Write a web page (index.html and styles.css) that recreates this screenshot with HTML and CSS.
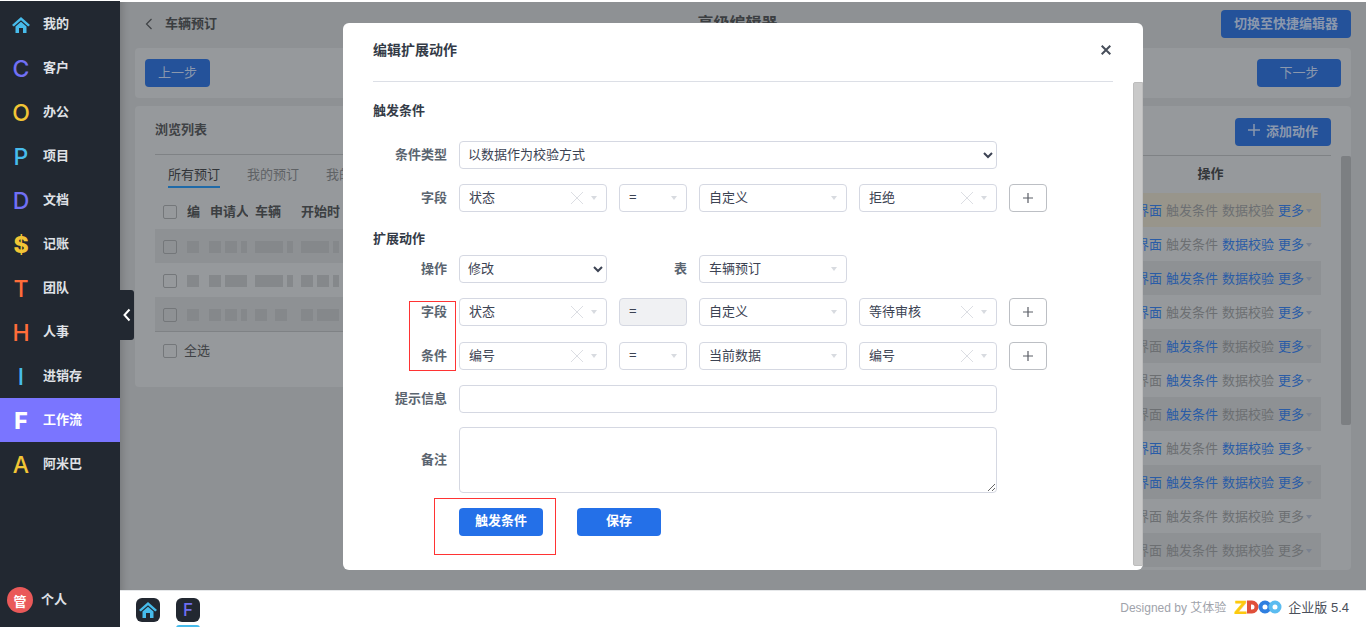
FILE: index.html
```html
<!DOCTYPE html>
<html lang="zh-CN">
<head>
<meta charset="utf-8">
<title>编辑扩展动作</title>
<link rel="stylesheet" href="styles.css">
</head>
<body>
<div class="app">

  <div class="sidebar">
    <div class="nav-item">
      <span class="nav-icon">
        <svg width="18" height="16" viewBox="0 0 18 16"><path fill="#47bcec" d="M0 8 9 0l9 8-1.8 1.6L9 3.2 1.8 9.6z"/><path fill="#47bcec" d="M3.5 9.6 9 4.8l5.500 4.800V16H11v-5H7v5H3.500z"/></svg>
      </span>我的
    </div>
    <div class="nav-item"><span class="nav-icon c-purple">C</span>客户</div>
    <div class="nav-item"><span class="nav-icon c-yellow">O</span>办公</div>
    <div class="nav-item"><span class="nav-icon c-blue">P</span>项目</div>
    <div class="nav-item"><span class="nav-icon c-purple">D</span>文档</div>
    <div class="nav-item"><span class="nav-icon c-yellow heavy">$</span>记账</div>
    <div class="nav-item"><span class="nav-icon c-orange">T</span>团队</div>
    <div class="nav-item"><span class="nav-icon c-orange">H</span>人事</div>
    <div class="nav-item"><span class="nav-icon c-blue">I</span>进销存</div>
    <div class="nav-item active"><span class="nav-icon heavy">F</span>工作流</div>
    <div class="nav-item"><span class="nav-icon c-yellow">A</span>阿米巴</div>
    <div class="user"><span class="avatar">管</span><span class="user-name">个人</span></div>
  </div>

  <div class="collapse-tab">
    <svg width="8" height="14" viewBox="0 0 8 14"><path d="M6.500 1.500 1.500 7l5 5.500" fill="none" stroke="#fff" stroke-width="2"/></svg>
  </div>

  <div class="content">
    <div class="main">
      <div class="topbar">
        <div class="topbar-left">
          <svg width="8" height="12" viewBox="0 0 8 12"><path d="M6.500 1 1.500 6l5 5" fill="none" stroke="#3f4245" stroke-width="1.200"/></svg>
          <span class="page-name">车辆预订</span>
        </div>
        <div class="page-title">高级编辑器</div>
        <div class="topbar-right"><button class="dim-btn switch-btn">切换至快捷编辑器</button></div>
      </div>

      <div class="steps">
        <button class="dim-btn prev-btn">上一步</button>
        <button class="dim-btn next-btn">下一步</button>
      </div>

      <div class="panels">
        <div class="panel-left">
          <div class="panel-title">浏览列表</div>
          <div class="tabs">
            <span class="tab current">所有预订</span>
            <span class="tab">我的预订</span>
            <span class="tab">我的审批</span>
          </div>
          <div class="list-head">
            <span class="box"></span>
            <span class="col col-no">编</span>
            <span class="col col-man">申请人</span>
            <span class="col col-car">车辆</span>
            <span class="col col-start">开始时间</span>
          </div>
          <div class="list-row even">
            <span class="box"></span>
            <span class="col col-no"><i class="m12"></i></span>
            <span class="col col-man"><i class="m12"></i><i class="m12"></i><i class="m6"></i></span>
            <span class="col col-car"><i class="m28"></i><i class="m6"></i></span>
            <span class="col col-start"><i class="m28"></i><i class="m6"></i></span>
          </div>
          <div class="list-row">
            <span class="box"></span>
            <span class="col col-no"><i class="m12"></i></span>
            <span class="col col-man"><i class="m12"></i><i class="m22"></i></span>
            <span class="col col-car"><i class="m28"></i><i class="m6"></i></span>
            <span class="col col-start"><i class="m12"></i><i class="m12"></i><i class="m6"></i></span>
          </div>
          <div class="list-row even last">
            <span class="box"></span>
            <span class="col col-no"><i class="m12"></i></span>
            <span class="col col-man"><i class="m12"></i><i class="m12"></i><i class="m6"></i></span>
            <span class="col col-car"><i class="m12"></i><i class="m12 wide-gap"></i></span>
            <span class="col col-start"><i class="m12"></i><i class="m22"></i></span>
          </div>
          <div class="select-all"><span class="box"></span>全选</div>
        </div>

        <div class="panel-right">
          <div class="panel-head">
            <button class="dim-btn add-btn"><svg width="12" height="12" viewBox="0 0 12 12"><path d="M6 0v12M0 6h12" stroke="#8b98ad" stroke-width="1.500"/></svg>添加动作</button>
          </div>
          <div class="op-wrap">
            <div class="op-table">
              <div class="op-head">操作</div>
              <div class="op-row tan"><span class="on">界面</span><span>触发条件</span><span>数据校验</span><span class="on">更多</span><i class="more"></i></div>
              <div class="op-row"><span class="on">界面</span><span>触发条件</span><span class="on">数据校验</span><span class="on">更多</span><i class="more"></i></div>
              <div class="op-row even"><span class="on">界面</span><span class="on">触发条件</span><span class="on">数据校验</span><span class="on">更多</span><i class="more"></i></div>
              <div class="op-row"><span class="on">界面</span><span>触发条件</span><span>数据校验</span><span class="on">更多</span><i class="more"></i></div>
              <div class="op-row even"><span>界面</span><span class="on">触发条件</span><span>数据校验</span><span class="on">更多</span><i class="more"></i></div>
              <div class="op-row"><span>界面</span><span class="on">触发条件</span><span>数据校验</span><span class="on">更多</span><i class="more"></i></div>
              <div class="op-row even"><span>界面</span><span class="on">触发条件</span><span>数据校验</span><span class="on">更多</span><i class="more"></i></div>
              <div class="op-row"><span class="on">界面</span><span>触发条件</span><span class="on">数据校验</span><span class="on">更多</span><i class="more"></i></div>
              <div class="op-row even"><span class="on">界面</span><span class="on">触发条件</span><span class="on">数据校验</span><span class="on">更多</span><i class="more"></i></div>
              <div class="op-row"><span>界面</span><span>触发条件</span><span>数据校验</span><span>更多</span><i class="more"></i></div>
              <div class="op-row even"><span>界面</span><span>触发条件</span><span>数据校验</span><span>更多</span><i class="more"></i></div>
            </div>
            <div class="page-scroll"></div>
          </div>
        </div>
      </div>

      <div class="overlay">
        <div class="modal">
          <div class="modal-head">
            <span class="modal-title">编辑扩展动作</span>
            <svg class="modal-close" width="10" height="10" viewBox="0 0 10 10"><path d="M.7.7l8.600 8.600M9.300.7.7 9.300" stroke="#474e5a" stroke-width="2"/></svg>
          </div>
          <div class="modal-body">
            <div class="form">
              <div class="form-heading first">触发条件</div>
              <div class="form-row gap-21">
                <label class="lbl">条件类型</label>
                <select class="native w-full"><option>以数据作为校验方式</option></select>
              </div>
              <div class="form-row">
                <label class="lbl">字段</label>
                <div class="chosen w148"><span class="val">状态</span><i class="clear"></i><i class="arrow"></i></div>
                <div class="chosen w68"><span class="val">=</span><i class="arrow"></i></div>
                <div class="chosen w148"><span class="val">自定义</span><i class="arrow"></i></div>
                <div class="chosen w138"><span class="val">拒绝</span><i class="clear"></i><i class="arrow"></i></div>
                <button class="plus"><svg width="10" height="10" viewBox="0 0 10 10"><path d="M5 0v10M0 5h10" stroke="#5a5e66" stroke-width="1.200"/></svg></button>
              </div>
              <div class="form-heading">扩展动作</div>
              <div class="form-row gap-7">
                <label class="lbl">操作</label>
                <select class="native w148"><option>修改</option></select>
                <label class="lbl w68">表</label>
                <div class="chosen w148"><span class="val">车辆预订</span><i class="arrow"></i></div>
              </div>
              <div class="form-row">
                <label class="lbl">字段</label>
                <div class="chosen w148"><span class="val">状态</span><i class="clear"></i><i class="arrow"></i></div>
                <div class="chosen w68 disabled"><span class="val">=</span></div>
                <div class="chosen w148"><span class="val">自定义</span><i class="arrow"></i></div>
                <div class="chosen w138"><span class="val">等待审核</span><i class="clear"></i><i class="arrow"></i></div>
                <button class="plus"><svg width="10" height="10" viewBox="0 0 10 10"><path d="M5 0v10M0 5h10" stroke="#5a5e66" stroke-width="1.200"/></svg></button>
              </div>
              <div class="form-row gap-16">
                <label class="lbl">条件</label>
                <div class="chosen w148"><span class="val">编号</span><i class="clear"></i><i class="arrow"></i></div>
                <div class="chosen w68"><span class="val">=</span><i class="arrow"></i></div>
                <div class="chosen w148"><span class="val">当前数据</span><i class="arrow"></i></div>
                <div class="chosen w138"><span class="val">编号</span><i class="clear"></i><i class="arrow"></i></div>
                <button class="plus"><svg width="10" height="10" viewBox="0 0 10 10"><path d="M5 0v10M0 5h10" stroke="#5a5e66" stroke-width="1.200"/></svg></button>
              </div>
              <div class="form-row">
                <label class="lbl">提示信息</label>
                <input class="text-input w-full" type="text">
              </div>
              <div class="form-row gap-14 tall">
                <label class="lbl">备注</label>
                <textarea class="text-area w-full"></textarea>
              </div>
              <div class="form-actions">
                <button class="primary">触发条件</button>
                <button class="primary">保存</button>
              </div>
            </div>
            <div class="modal-scroll"></div>
          </div>
          <div class="mark mark-fields"></div>
          <div class="mark mark-button"></div>
        </div>
      </div>
    </div>

    <div class="footer">
      <div class="app-tab">
        <span class="app-icon">
          <svg width="18" height="16" viewBox="0 0 18 16"><path fill="#47bcec" d="M0 8 9 0l9 8-1.800 1.600L9 3.200 1.800 9.600z"/><path fill="#47bcec" d="M3.500 9.600 9 4.800l5.500 4.800V16H11v-5H7v5H3.500z"/></svg>
        </span>
      </div>
      <div class="app-tab open">
        <span class="app-icon letter">F</span>
        <span class="open-bar"></span>
      </div>
      <div class="footer-right">
        <span class="designed">Designed by 艾体验</span>
        <svg class="logo" width="48" height="14" viewBox="0 0 48 14">
          <text x="0.500" y="13.500" font-family="Liberation Sans" font-weight="700" font-size="18" textLength="12.500" lengthAdjust="spacingAndGlyphs" fill="#fdc90f" stroke="#fdc90f" stroke-width=".6">Z</text>
          <path d="M15 2.500h3a4.500 4.500 0 0 1 0 9h-3z" fill="#fff" stroke="#e0503a" stroke-width="4"/>
          <circle cx="31" cy="7" r="4.500" fill="#fff" stroke="#2f7fe0" stroke-width="4"/>
          <circle cx="41" cy="7" r="4.500" fill="#fff" stroke="#5bbcf0" stroke-width="4"/>
        </svg>
        <span class="edition">企业版 5.4</span>
      </div>
    </div>
  </div>

</div>
</body>
</html>
```

FILE: styles.css
```css
* {
  box-sizing: border-box;
}

html, body {
  margin: 0;
  height: 100%;
  background: #fff;
  overflow: hidden;
}

body {
  font-family: "Liberation Sans", "Noto Sans CJK SC", sans-serif;
  font-size: 13px;
  color: #3c4353;
}

button, select, input, textarea {
  font-family: inherit;
  font-size: 13px;
}

.app {
  display: flex;
  width: 1366px;
  height: 627px;
  padding-top: 2px;
  position: relative;
}

/* sidebar */
.sidebar {
  width: 120px;
  margin-top: -1px;
  padding-top: 1px;
  flex: none;
  display: flex;
  flex-direction: column;
  background: #222831;
  color: #dfe1e6;
  font-weight: bold;
}

.nav-item {
  height: 44px;
  display: flex;
  align-items: center;
  line-height: 20px;
}

.nav-item.active {
  background: #7a75ff;
  color: #fff;
}

.nav-icon {
  width: 43px;
  flex: none;
  display: flex;
  justify-content: center;
  font-family: Inter, sans-serif;
  font-size: 23px;
  font-weight: 500;
  line-height: 24px;
  padding-right: 1px;
  padding-top: 1px;
}

.heavy { font-weight: 800; }
.c-purple { color: #7170f5; }
.c-yellow { color: #f2c535; }
.c-blue { color: #47bcec; }
.c-orange { color: #ff6d3a; }

.user {
  margin-top: auto;
  padding: 0 0 14px 7px;
  display: flex;
  align-items: center;
  gap: 8px;
}

.user-name { padding-bottom: 4px; }

.avatar {
  width: 26px;
  height: 26px;
  border-radius: 50%;
  background: #ea5959;
  color: #fff;
  display: flex;
  align-items: center;
  justify-content: center;
}

.collapse-tab {
  position: absolute;
  left: 120px;
  top: 290px;
  width: 14px;
  height: 50px;
  background: #222831;
  border-radius: 0 3px 3px 0;
  z-index: 5;
  display: flex;
  align-items: center;
  justify-content: center;
}

/* dimmed page under the dialog */
.content {
  flex: 1;
  min-width: 0;
  display: flex;
  flex-direction: column;
}

.main {
  height: 588px;
  flex: none;
  position: relative;
  background: #8e9194;
  box-shadow: inset 10px 0 8px -8px rgba(0, 0, 0, .18);
  overflow: hidden;
}

.topbar {
  display: flex;
  align-items: center;
  padding: 8px 15px 10px 25px;
}

.topbar-left, .topbar-right {
  flex: 1;
  display: flex;
  align-items: center;
}

.topbar-left { gap: 12px; }
.topbar-right { justify-content: flex-end; }

.page-name {
  font-weight: bold;
  color: #3b3e41;
  padding-bottom: 4px;
}

.page-title {
  font-size: 16px;
  font-weight: bold;
  color: #3b3e41;
  margin-right: 21px;
  padding-bottom: 4px;
}

.dim-btn {
  height: 28px;
  border: 0;
  border-radius: 4px;
  background: #24529a;
  color: #8b98ad;
  font-weight: bold;
  padding: 0 0 4px;
}

.switch-btn { width: 130px; }
.prev-btn { width: 65px; font-weight: normal; }
.next-btn { width: 84px; font-weight: normal; }

.steps {
  margin: 0 15px;
  height: 50px;
  padding: 0 10px;
  display: flex;
  align-items: center;
  justify-content: space-between;
  background: #96999c;
  border-radius: 4px;
}

.panels {
  margin: 8px 15px 0;
  display: flex;
  align-items: flex-start;
}

.panel-left {
  width: 300px;
  height: 281px;
  flex: none;
  background: #96999c;
  border-radius: 4px 0 0 4px;
  padding: 0 0 0 20px;
  overflow: hidden;
}

.panel-title {
  height: 49px;
  line-height: 48px;
  font-weight: bold;
  color: #3f4245;
  border-bottom: 1px solid #7f8285;
}

.tabs {
  height: 36px;
  padding: 11px 0 0 13px;
  display: flex;
  gap: 27px;
  white-space: nowrap;
}

.tab {
  height: 22px;
  line-height: 18px;
  color: #5f6265;
}

.tab.current {
  color: #323538;
  border-bottom: 2px solid #1f6aa8;
}

.list-head, .list-row {
  display: flex;
  align-items: center;
  padding-left: 8px;
  white-space: nowrap;
}

.list-head {
  height: 38px;
  font-weight: bold;
  color: #3c3f42;
}

.list-head .box { margin-top: 4px; }

.list-row {
  height: 34px;
  padding-top: 2px;
}

.list-row.even { background: #8e9194; }
.list-row.last { border-bottom: 1px solid #7f8285; height: 35px; }

.box {
  width: 14px;
  height: 14px;
  flex: none;
  border: 1px solid #74777a;
  border-radius: 2px;
  margin-right: 10px;
}

.col {
  display: flex;
  gap: 4px;
  flex: none;
  overflow: hidden;
}

.col-no { width: 22px; }
.col-man { width: 46px; }
.list-head .col-man { padding-left: 1px; width: 39px; margin-right: 7px; }
.col-car { width: 46px; }
.col-start { width: 39px; }

.col i {
  display: block;
  height: 12px;
  background: #85888b;
  flex: none;
}

.m6 { width: 6px; }
.m12 { width: 12px; }
.m22 { width: 22px; }
.m28 { width: 28px; }
.wide-gap { margin-left: 4px; }

.select-all {
  display: flex;
  align-items: center;
  line-height: 14px;
  padding: 12px 0 0 8px;
  color: #3f4245;
}

.select-all .box { margin-right: 7px; }

.panel-right {
  flex: 1;
  min-width: 0;
  height: 464px;
  background: #96999c;
  border-radius: 0 4px 4px 0;
  overflow: hidden;
}

.panel-head {
  height: 50px;
  margin-right: 20px;
  padding-top: 12px;
  display: flex;
  justify-content: flex-end;
  border-bottom: 1px solid #7f8285;
}

.add-btn {
  width: 96px;
  display: flex;
  align-items: center;
  justify-content: center;
  gap: 6px;
}

.op-wrap {
  display: flex;
  justify-content: flex-end;
  align-items: flex-start;
}

.op-table {
  width: 221px;
  margin-right: 20px;
}

.op-head {
  height: 37px;
  line-height: 35px;
  text-align: center;
  font-weight: bold;
  color: #333639;
}

.op-row {
  height: 34px;
  display: flex;
  align-items: center;
  justify-content: flex-end;
  gap: 4px;
  padding: 0 9px 2px 0;
  white-space: nowrap;
  color: #6c6f72;
}

.op-row .on { color: #2a5ca6; }
.op-row.even { background: #8e9194; }
.op-row.tan { background: #98958b; }

.more {
  width: 0;
  height: 0;
  margin: 3px 0 0 -2px;
  border: 3.500px solid transparent;
  border-top: 4px solid #7a8290;
  border-bottom: 0;
}

.page-scroll {
  width: 10px;
  height: 269px;
  background: #7c7f82;
  border-radius: 2px;
}

/* dialog */
.overlay {
  position: absolute;
  inset: 0;
  padding: 21px 0 0 223px;
}

.modal {
  width: 800px;
  height: 547px;
  position: relative;
  display: flex;
  flex-direction: column;
  background: #fff;
  border-radius: 6px;
}

.modal-head {
  height: 59px;
  margin: 0 30px;
  flex: none;
  display: flex;
  align-items: center;
  justify-content: space-between;
  padding: 0 2px 6px 0;
  border-bottom: 1px solid #dcdfe6;
}

.modal-title {
  font-size: 14px;
  font-weight: bold;
  color: #343b47;
}

.modal-close { margin-top: 2px; }

.modal-body {
  flex: 1;
  display: flex;
  min-height: 0;
}

.form {
  flex: 1;
  padding-left: 30px;
}

.modal-scroll {
  width: 10px;
  height: 484px;
  flex: none;
  background: #c9c9c9;
  border: 1px solid #bdbdbd;
  border-radius: 2px 0 0 2px;
}

.form-heading {
  height: 20px;
  line-height: 22px;
  margin-top: 16px;
  font-weight: bold;
  color: #343b47;
}

.form-heading.first { margin-top: 18px; }

.form-row {
  display: flex;
  align-items: center;
  gap: 12px;
  height: 28px;
  margin-top: 15px;
}

.gap-21 { margin-top: 21px; }
.gap-16 { margin-top: 16px; }
.gap-14 { margin-top: 14px; }
.gap-7 { margin-top: 7px; }
.form-row.tall { height: 66px; }

.lbl {
  width: 74px;
  flex: none;
  text-align: right;
  font-weight: bold;
  color: #5b6570;
  padding-bottom: 4px;
}

.lbl.w68 { width: 68px; }

.w148 { width: 148px; }
.w138 { width: 138px; }
.w68 { width: 68px; }
.w-full { width: 538px; }

.native, .chosen, .text-input, .text-area {
  border: 1px solid #d5d8e2;
  border-radius: 4px;
  background-color: #fff;
  color: #3c4353;
}

.native {
  height: 28px;
  padding: 0 0 2px 4px;
}

.chosen {
  height: 28px;
  flex: none;
  display: flex;
  align-items: center;
  padding: 0 9px;
}

.chosen.disabled { background: #f0f1f3; }

.val {
  flex: 1;
  white-space: nowrap;
  padding-bottom: 4px;
}

.clear {
  width: 12px;
  height: 12px;
  margin-right: 8px;
  background:
    linear-gradient(45deg, transparent calc(50% - .6px), #dcdee3 50%, transparent calc(50% + .6px)),
    linear-gradient(-45deg, transparent calc(50% - .6px), #dcdee3 50%, transparent calc(50% + .6px));
}

.arrow {
  width: 0;
  height: 0;
  margin-bottom: 1px;
  border: 3.500px solid transparent;
  border-top: 4px solid #d8dbe0;
  border-bottom: 0;
}

.plus {
  width: 38px;
  height: 28px;
  flex: none;
  padding: 0;
  display: flex;
  align-items: center;
  justify-content: center;
  background: #fff;
  border: 1px solid #bcbfc4;
  border-radius: 4px;
}

.text-input {
  height: 28px;
  outline: 0;
}

.text-area {
  height: 66px;
  outline: 0;
}

.form-actions {
  display: flex;
  gap: 34px;
  margin: 15px 0 0 86px;
}

.primary {
  width: 84px;
  height: 28px;
  border: 0;
  border-radius: 4px;
  background: #2470e8;
  color: #fff;
  font-weight: bold;
  padding: 0 0 6px;
}

.mark {
  position: absolute;
  border: 1px solid #f33;
}

.mark-fields {
  left: 66px;
  top: 278px;
  width: 47px;
  height: 70px;
}

.mark-button {
  left: 91px;
  top: 475px;
  width: 122px;
  height: 57px;
}

/* footer */
.footer {
  flex: 1;
  display: flex;
  gap: 16px;
  padding: 7px 17px 0 16px;
  border-top: 1px solid #e6e8ea;
}

.app-tab {
  width: 24px;
  display: flex;
  flex-direction: column;
  gap: 3px;
}

.app-icon {
  width: 24px;
  height: 24px;
  flex: none;
  background: #222831;
  border-radius: 6px;
  display: flex;
  align-items: center;
  justify-content: center;
}

.app-icon.letter {
  font-family: Inter, sans-serif;
  font-size: 17px;
  font-weight: 500;
  color: #6f6ff0;
}

.open-bar {
  height: 4px;
  flex: none;
  background: #47bcec;
  border-radius: 3px 3px 0 0;
}

.footer-right {
  margin-left: auto;
  height: 22px;
  padding-bottom: 5px;
  display: flex;
  align-items: center;
}

.designed {
  font-size: 12px;
  color: #a0a3ab;
  margin-right: 8px;
}

.edition {
  margin-left: 6px;
  color: #4a4f5a;
}
```
